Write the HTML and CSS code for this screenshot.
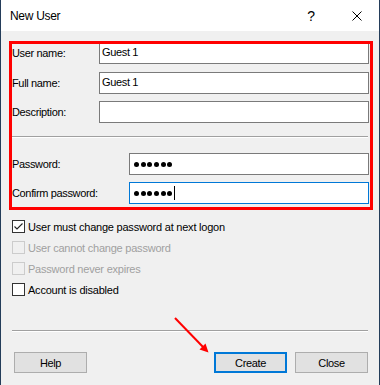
FILE: index.html
```html
<!DOCTYPE html>
<html lang="en">
<head>
    <meta charset="UTF-8">
    <title>New User</title>
    <link rel="stylesheet" href="styles.css">
</head>
<body>
    <div class="window">
        <div class="titlebar">
            <span class="title">New User</span>
            <span class="help-icon">?</span>
            <svg class="close-icon" width="10" height="10" viewBox="0 0 10 10">
                <path d="M0.5 0.5 L9.5 9.5 M9.5 0.5 L0.5 9.5" stroke="#000" stroke-width="1" fill="none"/>
            </svg>
        </div>

        <div class="dialog">
            <div class="row first">
                <label class="name-label">User name:</label>
                <input class="field" type="text" value="Guest 1">
            </div>
            <div class="row gap8">
                <label class="name-label">Full name:</label>
                <input class="field" type="text" value="Guest 1">
            </div>
            <div class="row gap7">
                <label class="name-label">Description:</label>
                <input class="field" type="text" value="">
            </div>

            <div class="separator top-sep"></div>

            <div class="row pw-first">
                <label class="pw-label">Password:</label>
                <div class="field dots">
                    <span class="dot"></span><span class="dot"></span><span class="dot"></span><span class="dot"></span><span class="dot"></span><span class="dot"></span>
                </div>
            </div>
            <div class="row gap7">
                <label class="pw-label">Confirm password:</label>
                <div class="field dots focused">
                    <span class="dot"></span><span class="dot"></span><span class="dot"></span><span class="dot"></span><span class="dot"></span><span class="dot"></span><span class="caret"></span>
                </div>
            </div>

            <div class="checks">
                <div class="check">
                    <span class="box">
                        <svg width="11" height="11" viewBox="0 0 11 11">
                            <path d="M1.5 5.5 L4 8 L9.5 2.5" stroke="#222" stroke-width="1.1" fill="none"/>
                        </svg>
                    </span>
                    User must change password at next logon
                </div>
                <div class="check disabled"><span class="box"></span>User cannot change password</div>
                <div class="check disabled"><span class="box"></span>Password never expires</div>
                <div class="check"><span class="box"></span>Account is disabled</div>
            </div>

            <div class="separator bottom-sep"></div>

            <div class="buttons">
                <button class="btn" type="button">Help</button>
                <span class="spacer"></span>
                <button class="btn default" type="button">Create</button>
                <button class="btn" type="button">Close</button>
            </div>
        </div>

        <!-- annotations drawn over the screenshot -->
        <div class="highlight"></div>
        <svg class="arrow" width="380" height="385" viewBox="0 0 380 385">
            <path d="M175 318 L204 348" stroke="#f00" stroke-width="2" fill="none"/>
            <polygon points="208.5,352.5 199.5,349.5 205.5,343.5" fill="#f00"/>
        </svg>
    </div>
</body>
</html>
```

FILE: styles.css
```css
:root {
    --frame-color: #243d5a;
    --face-color: #f0f0f0;
    --edit-border: #7a7a7a;
    --focus-color: #0078d7;
    --disabled-text: #a0a0a0;
}

* {
    box-sizing: border-box;
}

body {
    margin: 0;
    font-family: "Liberation Sans", Arial, sans-serif;
    font-size: 11px;
    color: #000;
    background: #fff;
}

.window {
    position: relative;
    width: 380px;
    height: 385px;
    border-left: 1px solid var(--frame-color);
    border-right: 1px solid var(--frame-color);
    background: var(--face-color);
    overflow: hidden;
}

.titlebar {
    height: 31px;
    background: #fff;
    display: flex;
    align-items: center;
    padding-left: 9px;
}

.title {
    font-size: 12px;
    letter-spacing: -0.3px;
    flex: 1;
}

.help-icon {
    font-size: 14px;
    margin-right: 37px;
}

.close-icon {
    margin-right: 17px;
}

.dialog {
    padding: 11px 10px 0 11px;
    letter-spacing: -0.35px;
}

.row {
    display: flex;
    align-items: center;
    height: 22px;
}

.gap8 {
    margin-top: 8px;
}

.gap7 {
    margin-top: 7px;
}

.name-label {
    width: 87px;
}

.pw-label {
    width: 117px;
}

.field {
    flex: 1;
    height: 22px;
    border: 1px solid var(--edit-border);
    background: #fff;
    font-family: "Liberation Sans", Arial, sans-serif;
    font-size: 11px;
    letter-spacing: -0.35px;
    padding: 0 0 2px 2px;
    margin: 0;
    outline: none;
    color: #000;
}

.dots {
    display: flex;
    align-items: center;
    padding: 0 0 0 4px;
}

.dot {
    width: 5px;
    height: 5px;
    border-radius: 50%;
    background: #000;
    margin-right: 1.7px;
}

.caret {
    width: 1px;
    height: 14px;
    background: #000;
}

.focused {
    border-color: var(--focus-color);
}

.separator {
    height: 2px;
    border-top: 1px solid #a0a0a0;
    border-bottom: 1px solid #fff;
    margin-right: 1px;
}

.top-sep {
    margin-top: 13px;
}

.pw-first {
    margin-top: 15px;
}

.checks {
    margin-top: 12px;
    letter-spacing: -0.22px;
}

.check {
    display: flex;
    align-items: center;
    height: 21px;
}

.box {
    width: 13px;
    height: 13px;
    border: 1px solid #333;
    background: #fff;
    margin-right: 3px;
    display: flex;
    align-items: center;
    justify-content: center;
}

.check.disabled {
    color: var(--disabled-text);
}

.check.disabled .box {
    border-color: #cccccc;
    background: var(--face-color);
}

.bottom-sep {
    margin-top: 30px;
}

.buttons {
    display: flex;
    margin: 20px 1px 0 2px;
}

.spacer {
    flex: 1;
}

.btn {
    width: 73px;
    height: 21px;
    background: #e1e1e1;
    border: 1px solid #adadad;
    font-family: "Liberation Sans", Arial, sans-serif;
    font-size: 11px;
    letter-spacing: -0.35px;
    color: #000;
    padding: 0;
}

.btn.default {
    border: 2px solid var(--focus-color);
    margin-right: 8px;
}

.highlight {
    position: absolute;
    left: 8px;
    top: 41px;
    width: 364px;
    height: 169px;
    border: 3px solid #f00;
}

.arrow {
    position: absolute;
    left: -1px;
    top: 0;
    pointer-events: none;
}
```
